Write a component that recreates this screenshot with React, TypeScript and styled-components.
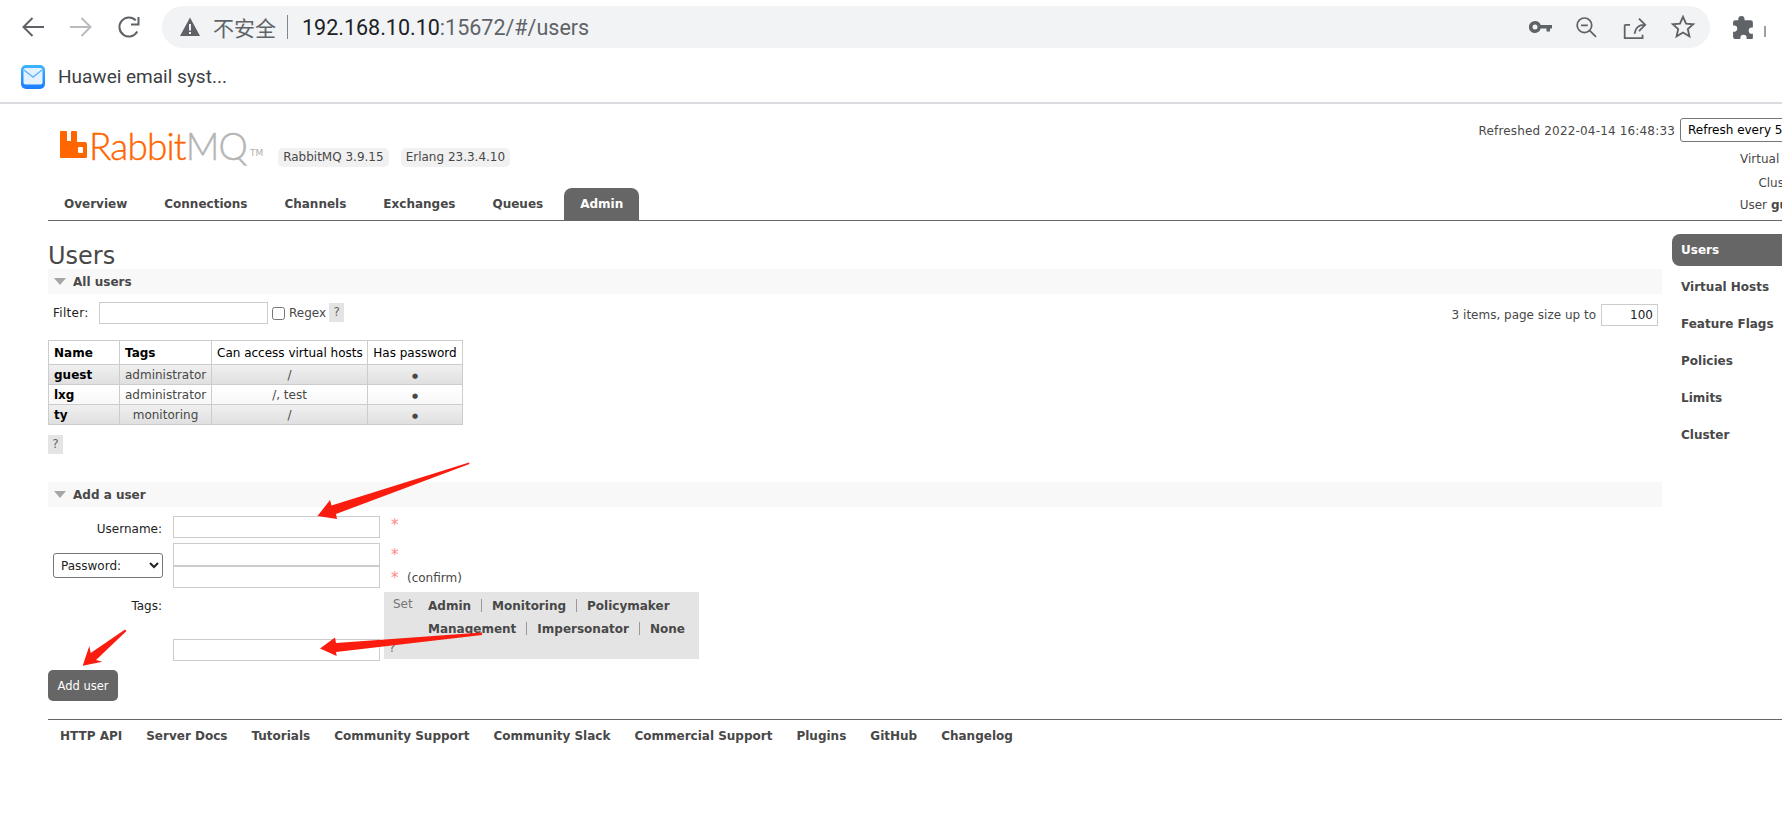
import React from "react";
import styled, { createGlobalStyle } from "styled-components";

const Global = createGlobalStyle`
  html, body { margin: 0; padding: 0; background: #fff; overflow: hidden; }
  * { box-sizing: border-box; }
`;

const Viewport = styled.div`
  position: relative;
  width: 1782px;
  height: 830px;
  overflow: hidden;
  background: #fff;
`;

/* ---------- browser chrome ---------- */
const Chrome = styled.header`
  border-bottom: 2px solid #dadce0;
  height: 104px;
`;
const Toolbar = styled.div`
  display: flex;
  align-items: flex-start;
  height: 60px;
  padding: 6px 0 0 9px;
`;
const NavButton = styled.div`
  width: 48px;
  height: 42px;
  display: flex;
  align-items: center;
  justify-content: center;
  flex-shrink: 0;
`;
const AddressPill = styled.div`
  margin-left: 9px;
  width: 1548px;
  height: 42px;
  border-radius: 21px;
  background: #f1f3f4;
  display: flex;
  align-items: center;
  padding-left: 17px;
  flex-shrink: 0;
`;
const Insecure = styled.span`
  margin-left: 12px;
  font: 21px "Noto Sans CJK SC", sans-serif;
  color: #5f6368;
  line-height: 24px;
`;
const Divider = styled.span`
  width: 1px;
  height: 24px;
  background: #80868b;
  margin: 0 14px 0 11px;
`;
const Url = styled.span`
  font: 21.5px Roboto, sans-serif;
  color: #5f6368;
  letter-spacing: 0;
  b { font-weight: 400; color: #202124; }
`;
const PillActions = styled.div`
  margin-left: auto;
  display: flex;
  align-items: center;
  height: 100%;
  padding-right: 14px;
  gap: 23px;
`;
const ExtensionSlot = styled.div`
  width: 48px;
  height: 42px;
  margin-left: 9px;
  display: flex;
  align-items: center;
  justify-content: center;
  flex-shrink: 0;
`;
const ProfileEdge = styled.div`
  width: 2px;
  height: 11px;
  margin-top: 20px;
  margin-left: -3px;
  background: #9aa0a6;
  flex-shrink: 0;
`;
const Bookmarks = styled.div`
  height: 42px;
  display: flex;
  align-items: center;
  padding-left: 21px;
  padding-bottom: 9px;
  gap: 13px;
  font: 19px Roboto, sans-serif;
  color: #3c4043;
`;

/* ---------- rabbit page ---------- */
const Page = styled.div`
  width: 1900px;
  padding-left: 48px;
  font: 12px "DejaVu Sans", Verdana, sans-serif;
  color: #484848;
`;
const Header = styled.div`
  display: grid;
  grid-template-columns: 1fr auto;
  height: 117px;
  border-bottom: 1px solid #666;
  padding-top: 14px;
`;
const Brand = styled.div`
  display: flex;
  flex-direction: column;
  justify-content: space-between;
`;
const LogoRow = styled.div`
  display: flex;
  align-items: flex-start;
  margin-top: 13px;
  padding-left: 12px;
`;
const LogoText = styled.span`
  font: 300 37px/29px Lato, sans-serif;
  -webkit-text-stroke: 0.4px currentColor;
  margin-left: 2px;
  height: 29px;
  color: #ff6600;
  letter-spacing: -0.85px;
  i { font-style: normal; color: #b5b5b5; }
`;
const Trademark = styled.span`
  font-size: 9px;
  color: #b0b0b0;
  margin: 17px 0 0 3px;
`;
const VersionBadge = styled.span`
  height: 19px;
  padding: 0 5px;
  line-height: 19px;
  background: #f1f1f1;
  border-radius: 5px;
  margin: 17px 0 0 ${p => p.$gap}px;
  white-space: nowrap;
`;
const Tabs = styled.nav`
  display: flex;
  gap: 5px;
`;
const Tab = styled.a`
  height: 32px;
  line-height: 33px;
  padding: 0 16px 0;
  font-weight: 700;
  border-radius: 8px 8px 0 0;
  background: ${p => (p.$active ? "#666" : "transparent")};
  color: ${p => (p.$active ? "#fff" : "#484848")};
`;
const Status = styled.div`
  width: 220px;
  display: flex;
  flex-direction: column;
  align-items: flex-end;
`;
const RefreshRow = styled.div`
  display: flex;
  align-items: center;
  gap: 5px;
  white-space: nowrap;
`;
const RefreshStamp = styled.span`
  padding-top: 2px;
  letter-spacing: 0.17px;
`;
const RefreshSelect = styled.select`
  width: 220px;
  height: 24px;
  font: 12px "DejaVu Sans", sans-serif;
  background: #fff;
  color: #000;
  border: 1px solid #767676;
  border-radius: 3px;
  padding-left: 3px;
`;
const InfoRow = styled.div`
  display: flex;
  justify-content: flex-end;
  margin-top: ${p => p.$top}px;
  line-height: 15px;
  white-space: nowrap;
`;
const InfoValue = styled.span`
  display: inline-block;
  width: ${p => p.$width}px;
  margin-left: 4px;
  b { font-weight: 700; }
`;

const Body = styled.div`
  display: flex;
  align-items: flex-start;
`;
const Main = styled.main`
  width: 1614px;
  flex-shrink: 0;
  padding-top: 22px;
`;
const Title = styled.h1`
  margin: 0;
  font: 400 24px/26px "DejaVu Sans", sans-serif;
  color: #484848;
`;
const SectionBar = styled.h2`
  margin: ${p => p.$top || 0}px 0 0;
  height: 25px;
  background: #f8f8f8;
  display: flex;
  align-items: center;
  padding-left: 6px;
  gap: 7px;
  font: 700 12px "DejaVu Sans", sans-serif;
  color: #484848;
`;
const Caret = styled.span`
  width: 0;
  height: 0;
  border-left: 6px solid transparent;
  border-right: 6px solid transparent;
  border-top: 7px solid #a6a6a6;
`;
const FilterRow = styled.div`
  display: flex;
  align-items: flex-start;
  margin-top: 8px;
  padding: 0 4px 0 5px;
  height: 24px;
`;
const FilterLabel = styled.label`
  line-height: 23px;
  color: #222;
  width: 46px;
  letter-spacing: 0.3px;
`;
const TextInput = styled.input`
  display: block;
  width: ${p => p.$width}px;
  height: ${p => p.$height || 22}px;
  border: 1px solid #ccc;
  background: #fff;
  padding: 0 4px;
  margin: 0;
  border-radius: 0;
  outline: none;
  font: 12px "DejaVu Sans", sans-serif;
  flex-shrink: 0;
`;
const Check = styled.input`
  margin: 5px 4px 0 4px;
  width: 13px;
  height: 13px;
`;
const RegexLabel = styled.label`
  line-height: 22px;
`;
const Help = styled.span`
  display: block;
  width: 15px;
  height: 19px;
  line-height: 19px;
  text-align: center;
  background: #e4e4e4;
  color: #666;
  margin-left: ${p => p.$left || 0}px;
  margin-top: ${p => p.$top || 0}px;
`;
const Pager = styled.div`
  margin-left: auto;
  display: flex;
  align-items: center;
  gap: 5px;
  margin-top: 2px;
`;
const PageSize = styled(TextInput)`
  text-align: right;
  color: #222;
`;
const Table = styled.table`
  margin-top: 14px;
  border-collapse: collapse;
  table-layout: fixed;
  width: 414px;
  border: 1px solid #ccc;
`;
const Th = styled.th`
  width: ${p => p.$width}px;
  height: 24px;
  padding: 0 5px;
  border: 1px solid #ccc;
  color: #000;
  background: #fff;
  font-weight: ${p => (p.$plain ? 400 : 700)};
  text-align: ${p => (p.$plain ? "center" : "left")};
  white-space: nowrap;
  overflow: hidden;
`;
const Row = styled.tr`
  background: ${p => (p.$alt ? "linear-gradient(#f0f0f0, #dfdfdf)" : "linear-gradient(#fff, #f8f8f8)")};
`;
const Td = styled.td`
  height: 20px;
  padding: 0 5px;
  border: 1px solid #ccc;
  text-align: center;
  white-space: nowrap;
`;
const NameCell = styled(Td)`
  text-align: left;
  font-weight: 700;
  color: #000;
`;
const PasswordDot = styled.span`
  font-size: 7px;
  line-height: 12px;
`;

const Form = styled.form`
  margin: 0;
`;
const FormRow = styled.div`
  display: flex;
  align-items: ${p => p.$align || "flex-start"};
  margin-top: ${p => p.$top}px;
  padding-left: 5px;
`;
const FieldLabel = styled.label`
  width: 110px;
  text-align: right;
  padding-right: 1px;
  line-height: ${p => p.$line || 22}px;
  color: #222;
  flex-shrink: 0;
`;
const KindSelect = styled.select`
  width: 110px;
  height: 25px;
  font: 12px "DejaVu Sans", sans-serif;
  color: #222;
  background: #fff;
  border: 1px solid #767676;
  border-radius: 3px;
  padding-left: 3px;
  flex-shrink: 0;
`;
const Fields = styled.div`
  margin-left: 10px;
  width: 207px;
  flex-shrink: 0;
  padding-top: ${p => p.$top || 0}px;
`;
const MarkColumn = styled.div`
  margin-left: 11px;
  align-self: flex-start;
  padding-top: ${p => p.$top}px;
`;
const MarkLine = styled.div`
  height: 23px;
  line-height: 15px;
  white-space: nowrap;
  display: flex;
  gap: 11px;
  &:last-child { height: 15px; }
`;
const Required = styled.span`
  color: #f88;
  width: 5px;
  font-size: 15px;
`;
const TagBox = styled.div`
  margin-left: 4px;
  width: 315px;
  height: 67px;
  background: #e4e4e4;
  display: flex;
  flex-direction: column;
  padding: 2px 0 0 5px;
`;
const TagLine = styled.div`
  display: flex;
  height: 23px;
  align-items: center;
  padding-left: ${p => p.$indent || 0}px;
`;
const SetLabel = styled.span`
  width: 39px;
  padding-left: 4px;
  color: #777;
  margin-top: -4px;
`;
const TagLink = styled.a`
  font-weight: 700;
  color: #484848;
`;
const TagSep = styled.span`
  width: 1px;
  height: 13px;
  background: #999;
  margin: 0 10px;
`;
const TagHelp = styled.span`
  padding-top: 1px;
  line-height: 15px;
  color: #666;
`;
const AddButton = styled.button`
  display: block;
  margin-top: 9px;
  width: 70px;
  height: 31px;
  border: 0;
  border-radius: 5px;
  background: #666;
  color: #fff;
  font: 11.5px "DejaVu Sans", sans-serif;
  padding: 0;
`;

const Sidebar = styled.aside`
  margin: 13px 0 0 10px;
  width: 218px;
  flex-shrink: 0;
  display: flex;
  flex-direction: column;
  gap: 5px;
`;
const SideLink = styled.a`
  height: 32px;
  line-height: 32px;
  padding-left: 9px;
  font-weight: 700;
  border-radius: 8px 0 0 8px;
  background: ${p => (p.$active ? "#666" : "transparent")};
  color: ${p => (p.$active ? "#fff" : "#484848")};
`;

const Footer = styled.footer`
  margin-top: 18px;
  border-top: 1px solid #666;
  padding: 9px 0 0 12px;
  display: flex;
  gap: 24px;
  font-weight: 700;
  line-height: 15px;
`;

const ArrowLayer = styled.svg`
  position: absolute;
  left: 0;
  top: 0;
  width: 1782px;
  height: 830px;
  pointer-events: none;
`;

const grey = "#5f6368";

const Stroke = ({ size = 28, color = grey, width = 2, d }: { size?: number; color?: string; width?: number; d: string }) => (
  <svg width={size} height={size} viewBox="0 0 28 28" fill="none" stroke={color} strokeWidth={width}>
    <path d={d} />
  </svg>
);

const Solid = ({ size = 28, d, viewBox = "0 0 28 28" }: { size?: number; d: string; viewBox?: string }) => (
  <svg width={size} height={size} viewBox={viewBox} fill={grey} fillRule="evenodd">
    <path d={d} />
  </svg>
);

const MailIcon = () => (
  <svg width="24" height="24" viewBox="0 0 24 24">
    <defs>
      <linearGradient id="mailGrad" x1="0" y1="0" x2="0" y2="1">
        <stop offset="0" stopColor="#3db5ff" />
        <stop offset="1" stopColor="#1a7cff" />
      </linearGradient>
    </defs>
    <rect x="0" y="0" width="24" height="24" rx="5" fill="url(#mailGrad)" />
    <rect x="2.5" y="3" width="19" height="16.5" rx="2" fill="#e4f2ff" />
    <path d="M3 5l9 7 9-7" fill="none" stroke="#5fb4ff" strokeWidth="1.4" />
  </svg>
);

const RabbitMark = () => (
  <svg width="27" height="27" viewBox="0 0 27 27">
    <path
      fill="#ff6600"
      fillRule="evenodd"
      d="M1 0h5a1 1 0 0 1 1 1v9h4V1a1 1 0 0 1 1-1h4a1 1 0 0 1 1 1v10h8a2 2 0 0 1 2 2v13a1 1 0 0 1-1 1H1a1 1 0 0 1-1-1V1a1 1 0 0 1 1-1zM18 17v4a1 1 0 0 0 1 1h3a1 1 0 0 0 1-1v-4a1 1 0 0 0-1-1h-3a1 1 0 0 0-1 1z"
    />
  </svg>
);

const users = [
  { name: "guest", tags: "administrator", hosts: "/" },
  { name: "lxg", tags: "administrator", hosts: "/, test" },
  { name: "ty", tags: "monitoring", hosts: "/" },
];
const tabs = ["Overview", "Connections", "Channels", "Exchanges", "Queues", "Admin"];
const side = ["Users", "Virtual Hosts", "Feature Flags", "Policies", "Limits", "Cluster"];
const links = [
  "HTTP API",
  "Server Docs",
  "Tutorials",
  "Community Support",
  "Community Slack",
  "Commercial Support",
  "Plugins",
  "GitHub",
  "Changelog",
];

export default function App() {
  return (
    <Viewport>
      <Global />
      <Chrome>
        <Toolbar>
          <NavButton>
            <Stroke d="M25 14H5M13.5 5L4.5 14l9 9" />
          </NavButton>
          <NavButton>
            <Stroke color="#b8babd" d="M3 14h20M14.500 5l9 9-9 9" />
          </NavButton>
          <NavButton>
            <Stroke d="M22.300 18.500A9.500 9.500 0 1 1 20.800 7.400M23.500 4v7.500H16" />
          </NavButton>
          <AddressPill>
            <Solid size={22} viewBox="0 0 22 22" d="M11 1.500L21 20H1zM10 8v6.500h2V8zM10 16v2h2v-2z" />
            <Insecure>不安全</Insecure>
            <Divider />
            <Url>
              <b>192.168.10.10</b>:15672/#/users
            </Url>
            <PillActions>
              <Solid size={24} viewBox="0 0 24 24" d="M7 6a6 6 0 0 1 5.700 4H24v3.500h-2v3h-3.500v-3h-5.800A6 6 0 1 1 7 6zM7 9.500a2.500 2.500 0 1 0 0 5 2.500 2.500 0 0 0 0-5z" />
              <Stroke size={24} d="M11 3.500a8.500 8.500 0 1 1 0 17 8.500 8.500 0 0 1 0-17zM7 12h8M17.500 18.500l7 7" />
              <Stroke size={25} d="M14 21c1-7 5-10 11-10M19 4l7 7-7 7M3 11v15h20v-4M3 11h6" />
              <Stroke size={26} d="M14 3l3.300 7.300 7.700.8-5.800 5.200 1.700 7.700-6.900-4-6.900 4 1.700-7.700L3 11.100l7.700-.8z" />
            </PillActions>
          </AddressPill>
          <ExtensionSlot>
            <Solid size={25} viewBox="0 0 24 24" d="M10 1a3 3 0 0 1 3 3v1h6a2 2 0 0 1 2 2v5h-1a3 3 0 1 0 0 6h1v4a1 1 0 0 1-1 1h-5v-1a3 3 0 1 0-6 0v1H4a2 2 0 0 1-2-2v-5h1a3 3 0 1 0 0-6H2V7a2 2 0 0 1 2-2h3V4a3 3 0 0 1 3-3z" />
          </ExtensionSlot>
          <ProfileEdge />
        </Toolbar>
        <Bookmarks>
          <MailIcon />
          <span>Huawei email syst...</span>
        </Bookmarks>
      </Chrome>

      <Page>
        <Header>
          <Brand>
            <LogoRow>
              <RabbitMark />
              <LogoText>
                Rabbit<i>MQ</i>
              </LogoText>
              <Trademark>TM</Trademark>
              <VersionBadge $gap={15}>RabbitMQ 3.9.15</VersionBadge>
              <VersionBadge $gap={12}>Erlang 23.3.4.10</VersionBadge>
            </LogoRow>
            <Tabs>
              {tabs.map(t => (
                <Tab key={t} $active={t === "Admin"}>
                  {t}
                </Tab>
              ))}
            </Tabs>
          </Brand>
          <Status>
            <RefreshRow>
              <RefreshStamp>Refreshed 2022-04-14 16:48:33</RefreshStamp>
              <RefreshSelect defaultValue="5">
                <option value="5">Refresh every 5 seconds</option>
              </RefreshSelect>
            </RefreshRow>
            <InfoRow $top={10}>
              Virtual host<InfoValue $width={87}>All</InfoValue>
            </InfoRow>
            <InfoRow $top={9}>
              Cluster<InfoValue $width={95}>rabbit@localhost</InfoValue>
            </InfoRow>
            <InfoRow $top={7}>
              User
              <InfoValue $width={129}>
                <b>guest</b>
              </InfoValue>
            </InfoRow>
          </Status>
        </Header>

        <Body>
          <Main>
            <Title>Users</Title>
            <SectionBar>
              <Caret />
              All users
            </SectionBar>
            <FilterRow>
              <FilterLabel>Filter:</FilterLabel>
              <TextInput $width={169} />
              <Check type="checkbox" />
              <RegexLabel>Regex</RegexLabel>
              <Help $left={3} $top={1}>
                ?
              </Help>
              <Pager>
                <span>3 items, page size up to</span>
                <PageSize $width={57} defaultValue="100" />
              </Pager>
            </FilterRow>
            <Table>
              <thead>
                <tr>
                  <Th $width={71}>Name</Th>
                  <Th $width={92}>Tags</Th>
                  <Th $width={156} $plain>
                    Can access virtual hosts
                  </Th>
                  <Th $width={95} $plain>
                    Has password
                  </Th>
                </tr>
              </thead>
              <tbody>
                {users.map((u, i) => (
                  <Row key={u.name} $alt={i % 2 === 0}>
                    <NameCell>{u.name}</NameCell>
                    <Td>{u.tags}</Td>
                    <Td>{u.hosts}</Td>
                    <Td>
                      <PasswordDot>●</PasswordDot>
                    </Td>
                  </Row>
                ))}
              </tbody>
            </Table>
            <Help $top={10}>?</Help>

            <SectionBar $top={28}>
              <Caret />
              Add a user
            </SectionBar>
            <Form onSubmit={e => e.preventDefault()}>
              <FormRow $top={9}>
                <FieldLabel $line={26}>Username:</FieldLabel>
                <Fields>
                  <TextInput $width={207} />
                </Fields>
                <MarkColumn $top={2}>
                  <MarkLine>
                    <Required>*</Required>
                  </MarkLine>
                </MarkColumn>
              </FormRow>
              <FormRow $top={1} $align="center">
                <KindSelect defaultValue="password">
                  <option value="password">Password:</option>
                </KindSelect>
                <Fields>
                  <TextInput $width={207} $height={23} />
                  <TextInput $width={207} />
                </Fields>
                <MarkColumn $top={5}>
                  <MarkLine>
                    <Required>*</Required>
                  </MarkLine>
                  <MarkLine>
                    <Required>*</Required>
                    <span>(confirm)</span>
                  </MarkLine>
                </MarkColumn>
              </FormRow>
              <FormRow $top={4}>
                <FieldLabel $line={29}>Tags:</FieldLabel>
                <Fields $top={47}>
                  <TextInput $width={207} />
                </Fields>
                <TagBox>
                  <TagLine>
                    <SetLabel>Set</SetLabel>
                    <TagLink>Admin</TagLink>
                    <TagSep />
                    <TagLink>Monitoring</TagLink>
                    <TagSep />
                    <TagLink>Policymaker</TagLink>
                  </TagLine>
                  <TagLine $indent={39}>
                    <TagLink>Management</TagLink>
                    <TagSep />
                    <TagLink>Impersonator</TagLink>
                    <TagSep />
                    <TagLink>None</TagLink>
                  </TagLine>
                  <TagHelp>?</TagHelp>
                </TagBox>
              </FormRow>
              <AddButton type="button">Add user</AddButton>
            </Form>
          </Main>
          <Sidebar>
            {side.map(s => (
              <SideLink key={s} $active={s === "Users"}>
                {s}
              </SideLink>
            ))}
          </Sidebar>
        </Body>

        <Footer>
          {links.map(l => (
            <a key={l}>{l}</a>
          ))}
        </Footer>
      </Page>

      <ArrowLayer viewBox="0 0 1782 830">
        <g fill="#fb1c10">
          <polygon points="469,462.500 469.500,464 336,514 337,519 317.500,516 330,500 331.500,505.500" />
          <polygon points="482,632.500 482,635 336,652 336.700,656 320,648.500 335,637.500 336,643" />
          <polygon points="125,629.500 126.500,631 96,660 102.300,661.700 82.700,665.700 89.300,646 90.700,653" />
        </g>
      </ArrowLayer>
    </Viewport>
  );
}
